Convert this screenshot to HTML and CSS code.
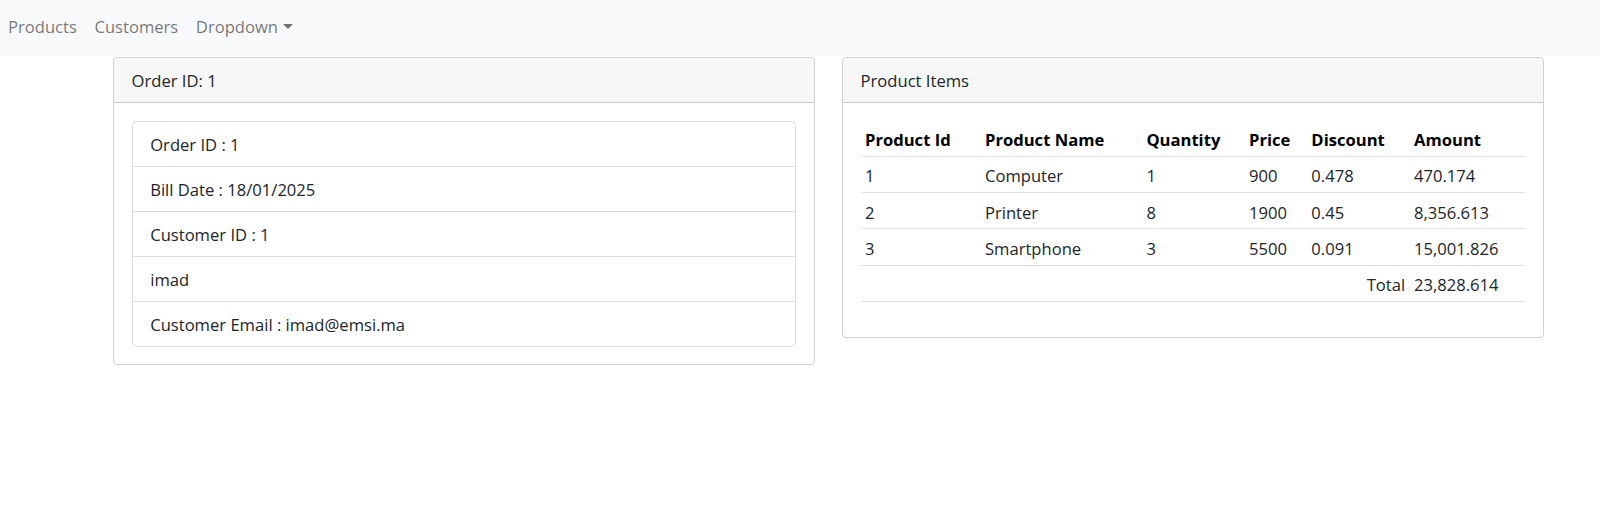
FILE: index.html
```html
<!DOCTYPE html>
<html lang="en">
<head>
<meta charset="utf-8">
<title>Order Details</title>
<link rel="stylesheet" href="styles.css">
</head>
<body>
<nav class="navbar">
  <ul class="nav-links">
    <li><a class="nav-link" href="#">Products</a></li>
    <li><a class="nav-link" href="#">Customers</a></li>
    <li><a class="nav-link dropdown-toggle" href="#">Dropdown</a></li>
  </ul>
</nav>
<main class="content">
  <section class="card">
    <div class="card-header">Order ID: 1</div>
    <div class="card-body">
      <ul class="list-group">
        <li class="list-item">Order ID : 1</li>
        <li class="list-item">Bill Date : 18/01/2025</li>
        <li class="list-item">Customer ID : 1</li>
        <li class="list-item">imad</li>
        <li class="list-item">Customer Email : imad@emsi.ma</li>
      </ul>
    </div>
  </section>
  <section class="card">
    <div class="card-header">Product Items</div>
    <div class="card-body">
      <table class="items">
        <colgroup>
          <col class="c-id"><col class="c-name"><col class="c-qty"><col class="c-price"><col class="c-disc"><col class="c-amt">
        </colgroup>
        <thead>
          <tr><th>Product Id</th><th>Product Name</th><th>Quantity</th><th>Price</th><th>Discount</th><th>Amount</th></tr>
        </thead>
        <tbody>
          <tr><td>1</td><td>Computer</td><td>1</td><td>900</td><td>0.478</td><td>470.174</td></tr>
          <tr><td>2</td><td>Printer</td><td>8</td><td>1900</td><td>0.45</td><td>8,356.613</td></tr>
          <tr><td>3</td><td>Smartphone</td><td>3</td><td>5500</td><td>0.091</td><td>15,001.826</td></tr>
          <tr><td class="total-label" colspan="5">Total</td><td>23,828.614</td></tr>
        </tbody>
      </table>
    </div>
  </section>
</main>
</body>
</html>
```
FILE: styles.css
```css
* { box-sizing: border-box; }
html, body { margin: 0; padding: 0; background: #fff; }
body {
  font-family: "Open Sans", "Noto Sans", "Liberation Sans", sans-serif;
  font-size: 16.6px;
  line-height: 26.4px;
  color: #212529;
}
.navbar {
  height: 56px;
  background: #f8f9fa;
  padding-top: 14px;
}
.nav-links {
  list-style: none;
  margin: 0;
  padding: 0 0 0 8px;
  display: flex;
  gap: 17.6px;
}
.nav-link {
  color: rgba(0, 0, 0, 0.55);
  text-decoration: none;
}
.dropdown-toggle::after {
  content: "";
  display: inline-block;
  margin-left: 4.5px;
  vertical-align: 4.5px;
  border-top: 5.3px solid;
  border-left: 5.3px solid transparent;
  border-right: 5.3px solid transparent;
}
.content {
  display: flex;
  align-items: flex-start;
  gap: 27px;
  padding-left: 113px;
  margin-top: 1px;
}
.card {
  width: 702px;
  border: 1px solid rgba(0, 0, 0, 0.175);
  border-radius: 4.4px;
  background: #fff;
  overflow: hidden;
}
.card-header {
  padding: 10.3px 17.6px 7.3px;
  background: rgba(0, 0, 0, 0.03);
  border-bottom: 1px solid rgba(0, 0, 0, 0.175);
}
.card-body { padding: 17.6px; }
.list-group {
  list-style: none;
  margin: 0;
  padding: 0;
  border: 1px solid rgba(0, 0, 0, 0.125);
  border-radius: 4.4px;
}
.list-item {
  padding: 10.8px 17.6px 6.8px;
  border-bottom: 1px solid rgba(0, 0, 0, 0.125);
  height: 45px;
}
.list-item:last-child { border-bottom: 0; height: 44px; }
.items {
  width: 100%;
  table-layout: fixed;
  border-collapse: collapse;
  margin-bottom: 17.6px;
}
.c-id { width: 120px; }
.c-name { width: 161.4px; }
.c-qty { width: 102.6px; }
.c-price { width: 62.4px; }
.c-disc { width: 102.6px; }
.items th, .items td {
  padding: 6.4px 4.4px 2.4px;
  text-align: left;
  border-bottom: 1px solid #dee2e6;
  white-space: nowrap;
  height: 36px;
}
.items th { font-weight: 700; color: #000; }
.items td.total-label { text-align: right; }
```
